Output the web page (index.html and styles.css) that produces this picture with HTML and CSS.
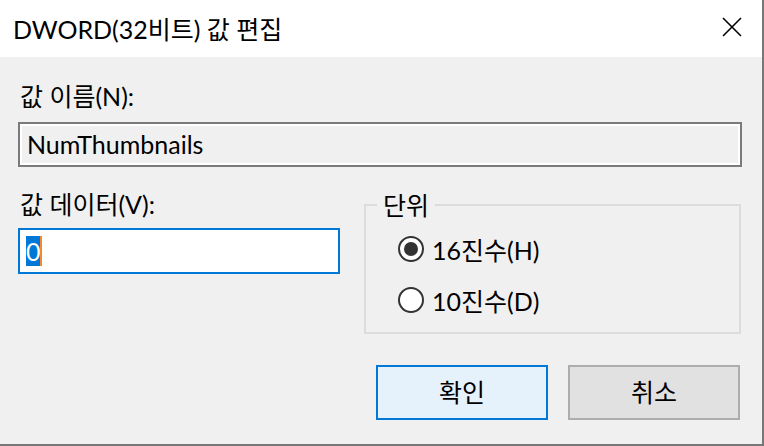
FILE: index.html
```html
<!DOCTYPE html>
<html>
<head>
    <title>DWORD(32비트) 값 편집</title>
    <link rel="stylesheet" href="styles.css">
</head>
<body>
    <div class="window">
        <div class="titlebar">
            <span class="title">DWORD(32비트) 값 편집</span>
            <svg class="close" width="20" height="20" viewBox="0 0 20 20">
                <path d="M1 1 L19 19 M19 1 L1 19" stroke="#000" stroke-width="1.6" fill="none"/>
            </svg>
        </div>
        <div class="content">
            <div class="label">값 이름(N):</div>
            <div class="namebox">NumThumbnails</div>

            <div class="lower">
                <div class="datacol">
                    <div class="label">값 데이터(V):</div>
                    <div class="databox"><span class="sel">0</span><span class="caret"></span></div>
                </div>
                <fieldset class="group">
                    <legend>단위</legend>
                    <div class="radio"><span class="dot checked"></span>16진수(H)</div>
                    <div class="radio"><span class="dot"></span>10진수(D)</div>
                </fieldset>
            </div>

            <div class="buttons">
                <div class="btn default">확인</div>
                <div class="btn">취소</div>
            </div>
        </div>
    </div>
</body>
</html>
```

FILE: styles.css
```css
body {
    margin: 0;
    font-family: Lato, "Noto Sans CJK KR", sans-serif;
    font-size: 25px;
    color: #000;
}
.window {
    width: 764px;
    height: 446px;
    box-sizing: border-box;
    background-color: #f0f0f0;
    border-right: 2px solid #777;
    border-bottom: 2px solid #777;
}
.titlebar {
    height: 57px;
    background-color: #fff;
    display: flex;
    align-items: center;
    justify-content: space-between;
    padding: 0 20px 0 13px;
}
.title {
    line-height: 52px;
}
.close {
    margin-top: -4px;
}
.content {
    padding: 0 20px 0 18px;
}
.label {
    padding-left: 2px;
    line-height: 26px;
    margin-top: 26px;
    height: 26px;
}
.lower .label {
    margin-top: 24px;
}
.namebox {
    margin-top: 13px;
    height: 45px;
    box-sizing: border-box;
    border: 2px solid #7a7a7a;
    box-shadow: inset 0 0 0 2px #fff;
    padding-left: 7px;
    line-height: 40px;
}
.lower {
    display: flex;
}
.datacol {
    width: 322px;
}
.databox {
    margin-top: 11px;
    height: 46px;
    box-sizing: border-box;
    border: 2px solid #0078d7;
    background-color: #fff;
    display: flex;
    align-items: center;
    padding-left: 6px;
}
.sel {
    background-color: #0078d7;
    color: #fff;
    width: 14px;
    height: 30px;
    line-height: 30px;
}
.caret {
    width: 2px;
    height: 30px;
    background-color: #f58a2a;
}
.group {
    margin: 25px 0 0 24px;
    width: 377px;
    height: 142px;
    box-sizing: border-box;
    border: 2px solid #dcdcdc;
    padding: 5px 0 0 0;
}
.group legend {
    margin-left: 11px;
    padding: 0 6px;
    line-height: 26px;
}
.radio {
    display: flex;
    align-items: center;
    height: 51px;
    margin-left: 32px;
}
.dot {
    width: 26px;
    height: 26px;
    box-sizing: border-box;
    border: 2px solid #333;
    border-radius: 50%;
    background-color: #fff;
    margin-right: 8px;
    position: relative;
}
.dot.checked::after {
    content: "";
    position: absolute;
    left: 4px;
    top: 4px;
    width: 14px;
    height: 14px;
    border-radius: 50%;
    background-color: #333;
}
.buttons {
    display: flex;
    justify-content: flex-end;
    gap: 20px;
    margin: 31px 2px 0 0;
}
.btn {
    width: 172px;
    height: 55px;
    box-sizing: border-box;
    border: 2px solid #adadad;
    background-color: #e1e1e1;
    text-align: center;
    line-height: 51px;
}
.btn.default {
    border-color: #0078d7;
    background-color: #e5f1fb;
}
```
